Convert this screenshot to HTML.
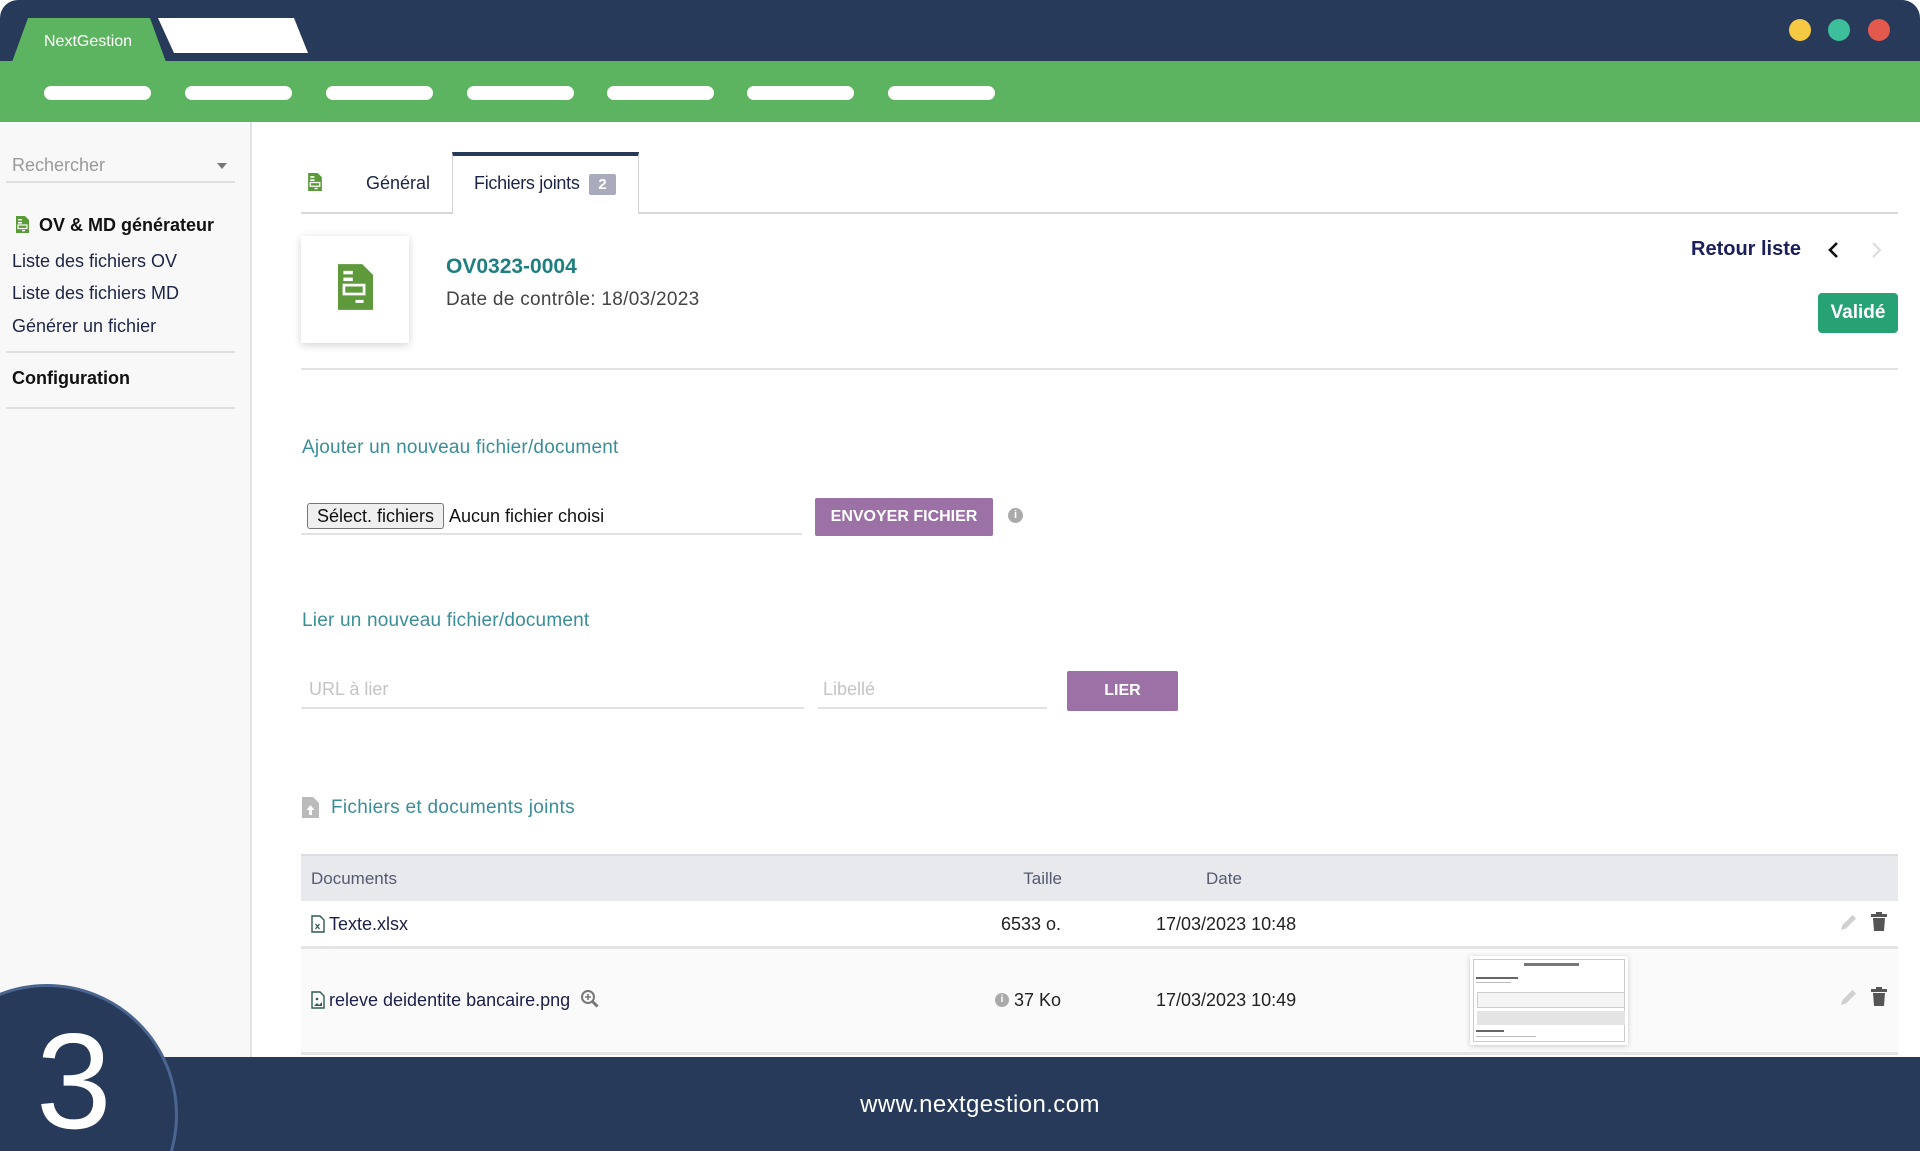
<!DOCTYPE html>
<html style="width:1920px;height:1151px;overflow:hidden"><head><meta charset="utf-8"><style>
*{margin:0;padding:0;box-sizing:border-box}
body{width:1920px;height:1151px;overflow:hidden;background:#fff;font-family:"Liberation Sans",Arial,sans-serif;position:relative}
.a{position:absolute;white-space:nowrap}
.pill{position:absolute;top:86px;width:107px;height:14px;border-radius:7px;background:#fff}
.t{line-height:1}
</style></head><body>
<div style="position:absolute;left:0;top:0;width:1920px;height:1151px;overflow:hidden">
<!-- top bar -->
<div class="a" style="left:0;top:0;width:1920px;height:62px;background:#273a5a;border-radius:18px 18px 0 0"></div>
<svg class="a" style="left:0;top:0" width="320" height="62">
<polygon points="28,18 150,18 166,62 12,62" fill="#5cb360"/>
<polygon points="158,18 294,18 308,53 174,53" fill="#fff"/>
</svg>
<div class="a t" style="left:44px;top:34px;font-size:16px;color:#fff">NextGestion</div>
<div class="a" style="left:1789px;top:19px;width:22px;height:22px;border-radius:50%;background:#f6c945"></div>
<div class="a" style="left:1828px;top:19px;width:22px;height:22px;border-radius:50%;background:#3cbf9a"></div>
<div class="a" style="left:1868px;top:19px;width:22px;height:22px;border-radius:50%;background:#e4594e"></div>
<!-- green bar -->
<div class="a" style="left:0;top:61px;width:1920px;height:61px;background:#5cb360"></div>
<div class="pill" style="left:44px"></div><div class="pill" style="left:185px"></div><div class="pill" style="left:326px"></div><div class="pill" style="left:467px"></div><div class="pill" style="left:607px"></div><div class="pill" style="left:747px"></div><div class="pill" style="left:888px"></div>
<!-- sidebar -->
<div class="a" style="left:0;top:122px;width:252px;height:936px;background:#f8f8f8;border-right:2px solid #e2e2e2"></div>
<div class="a t" style="left:12px;top:156px;font-size:18px;color:#9a9a9a">Rechercher</div>
<div class="a" style="left:217px;top:163px;border-left:5px solid transparent;border-right:5px solid transparent;border-top:6px solid #777"></div>
<div class="a" style="left:6px;top:181px;width:229px;height:2px;background:#e0e0e0"></div>
<svg class="a" style="left:16px;top:216px" width="13" height="17" viewBox="0 0 13 17"><path d="M0 0h9l4 4v13H0z" fill="#5a9a3a"/><rect x="2" y="3" width="4" height="1.5" fill="#fff"/><rect x="2" y="6" width="4" height="1.5" fill="#fff"/><rect x="2" y="9" width="9" height="3.5" fill="none" stroke="#fff" stroke-width="1.2"/><rect x="6" y="14" width="3" height="1.3" fill="#fff"/></svg>
<div class="a t" style="left:39px;top:216px;font-size:18px;font-weight:bold;color:#111">OV &amp; MD générateur</div>
<div class="a t" style="left:12px;top:252px;font-size:18px;color:#1c2545">Liste des fichiers OV</div>
<div class="a t" style="left:12px;top:284px;font-size:18px;color:#1c2545">Liste des fichiers MD</div>
<div class="a t" style="left:12px;top:317px;font-size:18px;color:#1c2545">Générer un fichier</div>
<div class="a" style="left:6px;top:351px;width:229px;height:2px;background:#e0e0e0"></div>
<div class="a t" style="left:12px;top:369px;font-size:18px;font-weight:bold;color:#111">Configuration</div>
<div class="a" style="left:6px;top:407px;width:229px;height:2px;background:#e0e0e0"></div>
<!-- tabs -->
<svg class="a" style="left:308px;top:173px" width="14" height="18" viewBox="0 0 13 17"><path d="M0 0h9l4 4v13H0z" fill="#5a9a3a"/><rect x="2" y="3" width="4" height="1.5" fill="#fff"/><rect x="2" y="6" width="4" height="1.5" fill="#fff"/><rect x="2" y="9" width="9" height="3.5" fill="none" stroke="#fff" stroke-width="1.2"/><rect x="6" y="14" width="3" height="1.3" fill="#fff"/></svg>
<div class="a t" style="left:366px;top:174px;font-size:18px;color:#1c2545">Général</div>
<div class="a" style="left:452px;top:152px;width:187px;height:62px;background:#fff;border:1px solid #d5d5d5;border-top:4px solid #273a5a;border-bottom:none"></div>
<div class="a t" style="left:474px;top:174px;font-size:18px;color:#1c2545;letter-spacing:-0.3px">Fichiers joints</div>
<div class="a t" style="left:589px;top:174px;width:27px;height:21px;line-height:21px;text-align:center;background:#a9abbd;color:#fff;font-size:15px;font-weight:bold;border-radius:2px">2</div>
<div class="a" style="left:301px;top:212px;width:1597px;height:2px;background:#d8d8d8"></div>
<div class="a" style="left:452px;top:212px;width:187px;height:2px;background:#fff;border-left:1px solid #d5d5d5;border-right:1px solid #d5d5d5"></div>
<!-- card -->
<div class="a" style="left:301px;top:236px;width:108px;height:107px;background:#fff;box-shadow:0 2px 8px rgba(0,0,0,.18)"></div>
<svg class="a" style="left:338px;top:264px" width="35" height="46" viewBox="0 0 13 17"><path d="M0 0h9l4 4v13H0z" fill="#5e9a3c"/><rect x="2" y="2.5" width="3.5" height="1.3" fill="#fff"/><rect x="2" y="5" width="3.5" height="1.3" fill="#fff"/><rect x="2.2" y="7.8" width="7.5" height="3.3" fill="none" stroke="#fff" stroke-width="1"/><rect x="6.5" y="13.3" width="3" height="1.1" fill="#fff"/></svg>
<div class="a t" style="left:446px;top:256px;font-size:21px;font-weight:bold;color:#1f7f80">OV0323-0004</div>
<div class="a t" style="left:446px;top:290px;font-size:19px;color:#444;letter-spacing:0.3px">Date de contrôle: 18/03/2023</div>
<div class="a t" style="left:1691px;top:239px;font-size:20px;font-weight:bold;color:#1b1f5a">Retour liste</div>
<svg class="a" style="left:1826px;top:240px" width="60" height="20"><path d="M11 3 4 10l7 7" stroke="#111" stroke-width="2.6" fill="none"/><path d="M47 3l7 7-7 7" stroke="#ddd" stroke-width="2.2" fill="none"/></svg>
<div class="a t" style="left:1818px;top:293px;width:80px;height:40px;line-height:40px;text-align:center;background:#26a275;color:#fff;font-weight:bold;font-size:19px;border-radius:4px">Validé</div>
<div class="a" style="left:301px;top:368px;width:1597px;height:2px;background:#e2e2e2"></div>
<!-- upload -->
<div class="a t" style="left:302px;top:438px;font-size:19px;color:#3a8e98;letter-spacing:0.2px">Ajouter un nouveau fichier/document</div>
<div class="a t" style="left:307px;top:503px;width:137px;height:26px;line-height:24px;text-align:center;background:#efefef;border:1px solid #777;border-radius:3px;font-size:18px;color:#111">Sélect. fichiers</div>
<div class="a t" style="left:449px;top:507px;font-size:18px;color:#111">Aucun fichier choisi</div>
<div class="a" style="left:301px;top:533px;width:501px;height:2px;background:#e2e2e2"></div>
<div class="a t" style="left:815px;top:498px;width:178px;height:38px;line-height:38px;text-align:center;background:#9c72a6;color:#fff;font-weight:bold;font-size:16px;border-radius:2px">ENVOYER FICHIER</div>
<div class="a t" style="left:1008px;top:508px;width:15px;height:15px;border-radius:50%;background:#aaa;color:#fff;font-size:11px;line-height:15px;text-align:center;font-weight:bold">i</div>
<div class="a t" style="left:302px;top:611px;font-size:19px;color:#3a8e98;letter-spacing:0.2px">Lier un nouveau fichier/document</div>
<div class="a t" style="left:309px;top:680px;font-size:18px;color:#c4c4c4">URL à lier</div>
<div class="a" style="left:301px;top:707px;width:503px;height:2px;background:#e2e2e2"></div>
<div class="a t" style="left:823px;top:680px;font-size:18px;color:#c4c4c4">Libellé</div>
<div class="a" style="left:818px;top:707px;width:229px;height:2px;background:#e2e2e2"></div>
<div class="a t" style="left:1067px;top:671px;width:111px;height:40px;line-height:40px;text-align:center;background:#9c72a6;color:#fff;font-weight:bold;font-size:16px;border-radius:2px">LIER</div>
<!-- files -->
<svg class="a" style="left:302px;top:797px" width="17" height="21" viewBox="0 0 17 21"><path d="M0 0h11l6 6v15H0z" fill="#bbb"/><path d="M8.5 8l-4 5h2.5v5h3v-5h2.5z" fill="#fff"/></svg>
<div class="a t" style="left:331px;top:798px;font-size:19px;color:#3a8e98;letter-spacing:0.3px">Fichiers et documents joints</div>
<div class="a" style="left:301px;top:854px;width:1597px;height:47px;background:#e8e9ed;border-top:2px solid #dcdde1"></div>
<div class="a t" style="left:311px;top:870px;font-size:17px;color:#555a70">Documents</div>
<div class="a t" style="left:1000px;top:870px;width:62px;text-align:right;font-size:17px;color:#555a70">Taille</div>
<div class="a t" style="left:1206px;top:870px;font-size:17px;color:#555a70">Date</div>
<svg class="a" style="left:311px;top:915px" width="14" height="18" viewBox="0 0 14 18"><path d="M1 1h8l4 4v12H1z" fill="#fff" stroke="#2e5a50" stroke-width="1.4"/><path d="M4.5 9l4 5M8.5 9l-4 5" stroke="#2e5a50" stroke-width="1.2"/></svg>
<div class="a t" style="left:329px;top:915px;font-size:18px;color:#1c1f4a">Texte.xlsx</div>
<div class="a t" style="left:960px;top:915px;width:101px;text-align:right;font-size:18px;color:#222">6533 o.</div>
<div class="a t" style="left:1156px;top:915px;font-size:18px;color:#222">17/03/2023 10:48</div>
<div class="a" style="left:301px;top:946px;width:1597px;height:3px;background:#e4e4e4"></div>
<div class="a" style="left:301px;top:949px;width:1597px;height:104px;background:#fafafa"></div>
<svg class="a" style="left:311px;top:991px" width="14" height="18" viewBox="0 0 14 18"><path d="M1 1h8l4 4v12H1z" fill="#fff" stroke="#2e5a50" stroke-width="1.4"/><circle cx="6" cy="8" r="1.3" fill="#2e5a50"/><path d="M3 15l3-3 2 2 3-3v4z" fill="#2e5a50"/></svg>
<div class="a t" style="left:329px;top:991px;font-size:18px;color:#1c1f4a">releve deidentite bancaire.png</div>
<svg class="a" style="left:580px;top:989px" width="20" height="20"><circle cx="8" cy="8" r="6" fill="none" stroke="#777" stroke-width="2"/><path d="M12.5 12.5l5 5" stroke="#777" stroke-width="3"/><path d="M5 8h6M8 5v6" stroke="#777" stroke-width="1.6"/></svg>
<div class="a t" style="left:995px;top:993px;width:14px;height:14px;border-radius:50%;background:#aaa;color:#fff;font-size:10px;line-height:14px;text-align:center;font-weight:bold">i</div>
<div class="a t" style="left:1014px;top:991px;font-size:18px;color:#222">37 Ko</div>
<div class="a t" style="left:1156px;top:991px;font-size:18px;color:#222">17/03/2023 10:49</div>
<div class="a" style="left:1470px;top:956px;width:158px;height:89px;background:#fff;box-shadow:0 1px 5px rgba(0,0,0,.2);padding:3px">
<div style="border:1px solid #ccc;height:83px;position:relative">
<div class="a" style="left:50px;top:3px;width:55px;height:3px;background:#777"></div>
<div class="a" style="left:2px;top:17px;width:42px;height:2px;background:#666"></div>
<div class="a" style="left:2px;top:22px;width:35px;height:1px;background:#bbb"></div>
<div class="a" style="left:3px;top:32px;width:148px;height:16px;border:1px solid #ccc;background:#f4f4f4"></div>
<div class="a" style="left:3px;top:51px;width:148px;height:14px;background:#e4e4e4"></div>
<div class="a" style="left:2px;top:70px;width:28px;height:2px;background:#666"></div>
<div class="a" style="left:2px;top:76px;width:60px;height:1px;background:#bbb"></div>
</div></div>
<svg class="a" style="left:1838px;top:911px" width="22" height="22"><path d="M3 19l1.5-5 10-10 3.5 3.5-10 10z" fill="#d0d0d0"/></svg>
<svg class="a" style="left:1870px;top:912px" width="18" height="20"><rect x="1" y="2" width="16" height="3" fill="#555"/><rect x="6" y="0" width="6" height="2" fill="#555"/><path d="M3 6h12l-1 13H4z" fill="#555"/></svg>
<svg class="a" style="left:1838px;top:986px" width="22" height="22"><path d="M3 19l1.5-5 10-10 3.5 3.5-10 10z" fill="#d0d0d0"/></svg>
<svg class="a" style="left:1870px;top:987px" width="18" height="20"><rect x="1" y="2" width="16" height="3" fill="#555"/><rect x="6" y="0" width="6" height="2" fill="#555"/><path d="M3 6h12l-1 13H4z" fill="#555"/></svg>
<div class="a" style="left:301px;top:1052px;width:1597px;height:3px;background:#e4e4e4"></div>
<!-- footer -->
<div class="a" style="left:0;top:1057px;width:1920px;height:94px;background:#273a5a"></div>
<div class="a t" style="left:0;top:1093px;width:1960px;text-align:center;font-size:24px;color:#fff;letter-spacing:0.4px">www.nextgestion.com</div>
<div class="a" style="left:-84px;top:984px;width:262px;height:262px;border-radius:50%;background:#273a5a;border:3px solid #4a6690"></div>
<div class="a" style="left:36px;top:1013px;font-size:136px;line-height:1;color:#fff">3</div>
</div>
</body></html>
